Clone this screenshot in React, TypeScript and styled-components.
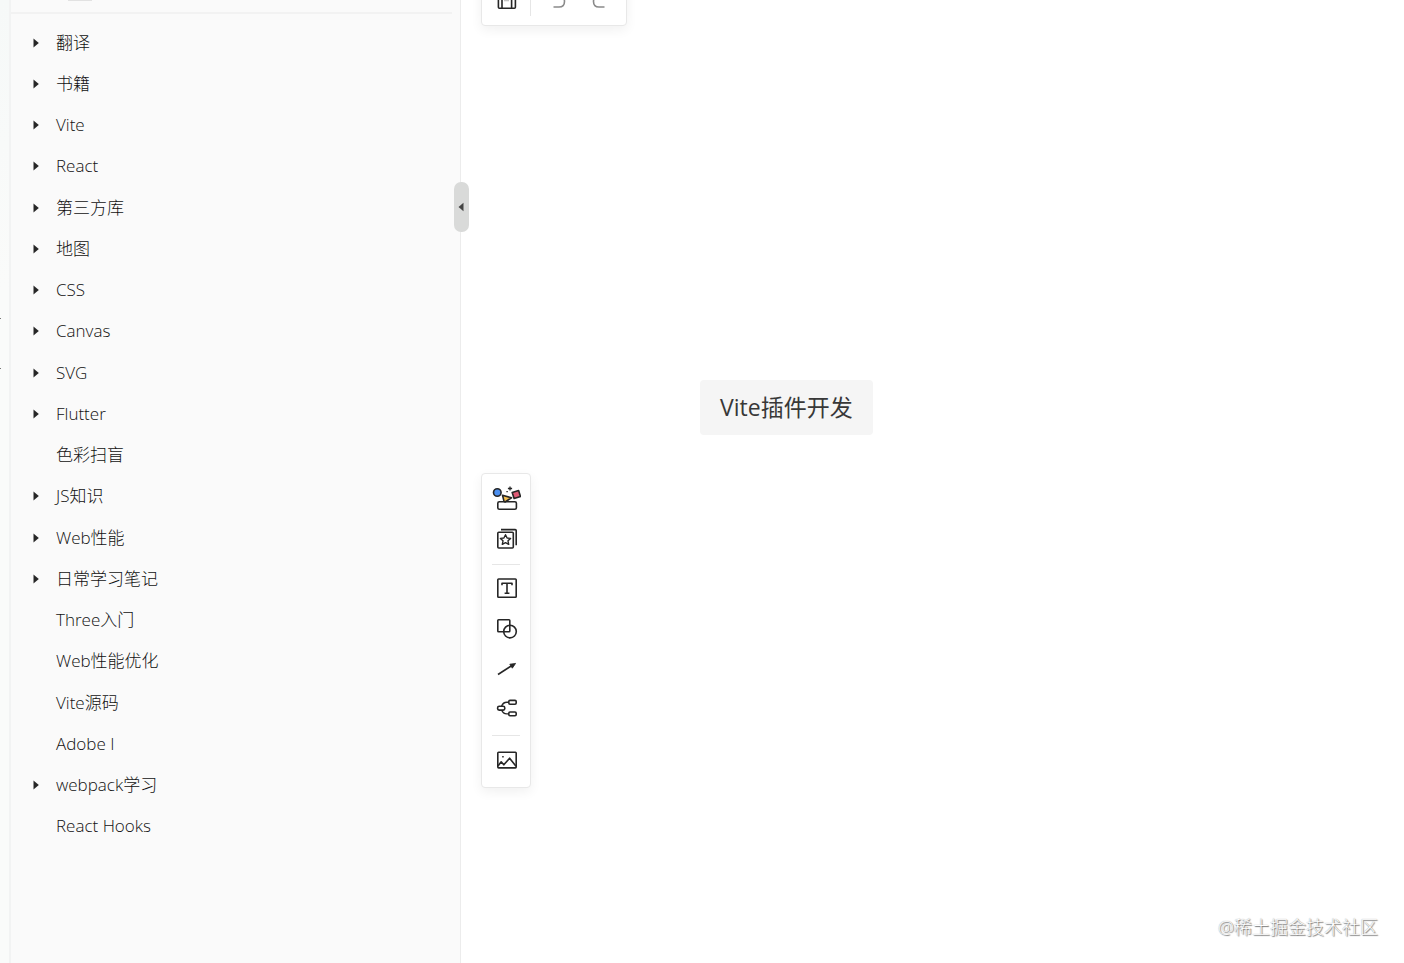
import React, { useState } from 'react';
import styled, { createGlobalStyle } from 'styled-components';

const GlobalStyle = createGlobalStyle`
  * { box-sizing: border-box; }
  body {
    margin: 0;
    background: #fff;
    color: #262626;
    font-family: 'Open Sans', 'Noto Sans CJK SC', sans-serif;
  }
  button { font: inherit; color: inherit; }
`;

const Page = styled.div`
  display: flex;
  min-height: 100vh;
  overflow: hidden;
`;

const Rail = styled.div`
  flex: 0 0 11px;
  height: 100vh;
  padding-top: 318px;
  display: flex;
  flex-direction: column;
  gap: 49px;
  background: linear-gradient(#f6f9f8, #fafbfa 30%);
  border-right: 2px solid #f2f3f3;
`;

const RailMark = styled.span`
  width: 1px;
  height: 1px;
  background: #777;
`;

const Sidebar = styled.aside`
  flex: 0 0 450px;
  background: #fafafa;
  border-right: 1px solid #ececec;
`;

const SidebarHead = styled.div`
  height: 14px;
  margin-right: 8px;
  padding-left: 57px;
  border-bottom: 2px solid #f2f2f2;
`;

const HeadTab = styled.div`
  width: 24px;
  height: 1px;
  background: #e2e2e2;
`;

const Tree = styled.ul`
  display: grid;
  grid-auto-rows: 1fr;
  height: 825px;
  margin: 8px 0 0;
  padding: 0;
  list-style: none;
`;

const TreeRow = styled.li`
  display: flex;
  align-items: center;
  padding-left: 20px;
`;

const Toggle = styled.button`
  display: flex;
  justify-content: center;
  align-items: center;
  width: 10px;
  height: 20px;
  padding: 0;
  border: 0;
  background: none;
`;

const TreeLink = styled.a<{ $leaf: boolean }>`
  margin-left: ${(p) => (p.$leaf ? 25 : 15)}px;
  font-size: 17px;
  font-weight: 300;
  line-height: 24px;
  color: #111;
  text-decoration: none;
`;

const Board = styled.main`
  position: relative;
  flex: 1;
  min-width: 0;
`;

const Collapse = styled.button`
  position: absolute;
  left: -7px;
  top: 182px;
  display: flex;
  align-items: center;
  justify-content: center;
  width: 15px;
  height: 50px;
  padding: 0 2px 0 0;
  border: 0;
  border-radius: 7px;
  background: #d9dad9;
`;

const Panel = styled.div`
  position: absolute;
  left: 20px;
  display: flex;
  background: #fff;
  border: 1px solid #e8e8e8;
  border-radius: 4px;
  box-shadow: 0 4px 12px rgba(0, 0, 0, 0.06);
`;

const TopBar = styled(Panel)`
  top: -26px;
  height: 52px;
  padding: 5px 7px 5px 4px;
  align-items: center;
`;

const ToolBar = styled(Panel)`
  top: 473px;
  flex-direction: column;
  width: 50px;
  padding: 4px 4px 7px;
`;

const ToolButton = styled.button`
  display: flex;
  align-items: center;
  justify-content: center;
  width: 40px;
  height: 40px;
  padding: 0;
  border: 0;
  background: none;
`;

const Rule = styled.div`
  height: 1px;
  margin: 6px 6px 4px;
  background: #e6e6e6;
`;

const VRule = styled.div`
  width: 1px;
  height: 32px;
  margin: 0 8px 0 4px;
  background: #e6e6e6;
`;

const MindNode = styled.div`
  position: absolute;
  left: 239px;
  top: 380px;
  padding: 11px 20px;
  border-radius: 4px;
  background: #f5f5f5;
  font-size: 23px;
  line-height: 33px;
  color: #383838;
  white-space: nowrap;
`;

const Watermark = styled.div`
  position: absolute;
  right: 26px;
  bottom: 23px;
  font-size: 18px;
  font-weight: 300;
  line-height: 26px;
  color: #fff;
  text-shadow: 1px 1px 1px #777, 0 0 1px #888;
`;

type IconProps = { children: React.ReactNode; x?: number; y?: number };

const Icon = ({ children, x = -1, y = 0 }: IconProps) => (
  <svg
    width="30"
    height="30"
    viewBox={`${x} ${y} 30 30`}
    fill="none"
    stroke="#262626"
    strokeWidth="1.6"
    strokeLinejoin="round"
    aria-hidden="true"
  >
    {children}
  </svg>
);

const icons = {
  resources: (
    <Icon x={0}>
      <rect x="6.8" y="18.8" width="18.6" height="7.4" rx="1.5" />
      <path d="M11.5 12.2l9 2.6-6.400 4.200-1-0.400z" fill="#f5c04f" />
      <circle cx="6.3" cy="9.5" r="3.8" fill="#4b8ff0" />
      <path d="M21.2 9.4l6.400-1.900 1.900 6-6.400 1.900z" fill="#df5a75" />
      <path d="M19 3.400v4.200M16.900 5.500h4.200" strokeWidth="1.3" />
      <path d="M15.400 8.600h1.400" strokeWidth="1.4" />
    </Icon>
  ),
  templates: (
    <Icon y={-1}>
      <rect x="5.8" y="8.2" width="15.5" height="15.8" rx="1" />
      <path d="M9 5.6h14.2q1 0 1 1v14.6" />
      <path d="M13.5 10.700l1.600 3.300 3.500.4-2.600 2.400.7 3.500-3.200-1.700-3.200 1.700.7-3.500-2.600-2.400 3.500-.4z" strokeWidth="1.4" />
    </Icon>
  ),
  text: (
    <Icon y={1}>
      <rect x="5.8" y="6" width="18.4" height="18.2" rx="0.8" />
      <path d="M10 12.3v-2h10v2M15 10.3v10M12.6 20.3h4.8" />
    </Icon>
  ),
  shapes: (
    <Icon>
      <rect x="5.8" y="5.8" width="12" height="12" rx="0.8" />
      <circle cx="18" cy="17.6" r="6.3" />
    </Icon>
  ),
  line: (
    <Icon>
      <path d="M6 20.5l14-9" />
      <path d="M17.8 10.2l5.8-.8-3.3 4.8z" fill="#262626" strokeWidth="0.8" />
    </Icon>
  ),
  mindmap: (
    <Icon y={1}>
      <rect x="5.6" y="13.3" width="7.2" height="3.8" rx="1.6" />
      <rect x="16.8" y="7.400" width="7.400" height="3.8" rx="1.2" />
      <rect x="16.8" y="19" width="7.400" height="3.8" rx="1.2" />
      <path d="M9.600 13.300q1.400-4 5.200-4h2M9.600 17.100q1.400 3.800 5.200 3.800h2" strokeWidth="1.4" />
    </Icon>
  ),
  image: (
    <Icon>
      <rect x="5.8" y="7.3" width="18.4" height="15.6" rx="0.8" />
      <path d="M6 21l3.200-4.200 2.600 3 5.800-6.600 6.400 8" />
      <path d="M10.200 11.800h1.500" />
    </Icon>
  ),
  save: (
    <Icon>
      <path d="M12 15.500h5" stroke="#c4c4c4" />
      <path d="M6.400 6h17v16.200q0 1-1 1H7.400q-1 0-1-1zM10 23V13.500h9.600V23" />
    </Icon>
  ),
  undo: (
    <Icon x={0}>
      <path d="M9.500 22h5.500q5.500 0 5.500-5.500T15 11H8" stroke="#8a8a8a" />
    </Icon>
  ),
  redo: (
    <Icon x={1}>
      <path d="M21.500 22H16q-5.500 0-5.500-5.500T16 11h6" stroke="#8a8a8a" />
    </Icon>
  ),
};

const Triangle = ({ left }: { left?: boolean }) => (
  <svg width="6" height="10" viewBox="0 0 6 10" aria-hidden="true">
    <path d={left ? 'M5.500 0.800v8.400L0.500 5z' : 'M0.500 0.500v9L5.800 5z'} fill={left ? '#444' : '#262626'} />
  </svg>
);

const docs: { title: string; leaf?: boolean }[] = [
  { title: '翻译' },
  { title: '书籍' },
  { title: 'Vite' },
  { title: 'React' },
  { title: '第三方库' },
  { title: '地图' },
  { title: 'CSS' },
  { title: 'Canvas' },
  { title: 'SVG' },
  { title: 'Flutter' },
  { title: '色彩扫盲', leaf: true },
  { title: 'JS知识' },
  { title: 'Web性能' },
  { title: '日常学习笔记' },
  { title: 'Three入门', leaf: true },
  { title: 'Web性能优化', leaf: true },
  { title: 'Vite源码', leaf: true },
  { title: 'Adobe I', leaf: true },
  { title: 'webpack学习' },
  { title: 'React Hooks', leaf: true },
];

export default function App() {
  const [open, setOpen] = useState(true);
  return (
    <>
      <GlobalStyle />
      <Page>
        <Rail>
          <RailMark />
          <RailMark />
        </Rail>
        {open && (
          <Sidebar>
            <SidebarHead>
              <HeadTab />
            </SidebarHead>
            <Tree>
              {docs.map((doc) => (
                <TreeRow key={doc.title}>
                  {!doc.leaf && (
                    <Toggle aria-label={doc.title}>
                      <Triangle />
                    </Toggle>
                  )}
                  <TreeLink href="#" $leaf={!!doc.leaf}>
                    {doc.title}
                  </TreeLink>
                </TreeRow>
              ))}
            </Tree>
          </Sidebar>
        )}
        <Board>
          <Collapse aria-label="收起" onClick={() => setOpen(!open)}>
            <Triangle left />
          </Collapse>
          <TopBar>
            <ToolButton aria-label="保存">{icons.save}</ToolButton>
            <VRule />
            <ToolButton aria-label="撤销">{icons.undo}</ToolButton>
            <ToolButton aria-label="重做">{icons.redo}</ToolButton>
          </TopBar>
          <MindNode>Vite插件开发</MindNode>
          <ToolBar>
            <ToolButton aria-label="素材">{icons.resources}</ToolButton>
            <ToolButton aria-label="模板">{icons.templates}</ToolButton>
            <Rule />
            <ToolButton aria-label="文本">{icons.text}</ToolButton>
            <ToolButton aria-label="图形">{icons.shapes}</ToolButton>
            <ToolButton aria-label="连线">{icons.line}</ToolButton>
            <ToolButton aria-label="思维导图">{icons.mindmap}</ToolButton>
            <Rule />
            <ToolButton aria-label="图片">{icons.image}</ToolButton>
          </ToolBar>
          <Watermark>@稀土掘金技术社区</Watermark>
        </Board>
      </Page>
    </>
  );
}
